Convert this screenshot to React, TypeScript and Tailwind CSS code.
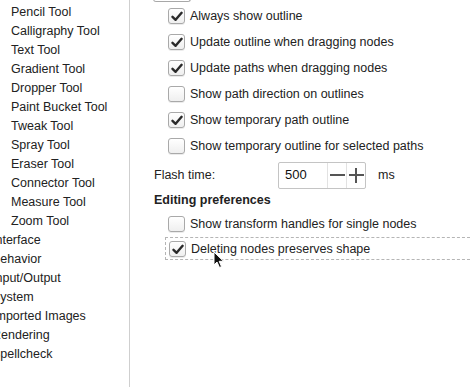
const tools = [
  "Pencil Tool",
  "Calligraphy Tool",
  "Text Tool",
  "Gradient Tool",
  "Dropper Tool",
  "Paint Bucket Tool",
  "Tweak Tool",
  "Spray Tool",
  "Eraser Tool",
  "Connector Tool",
  "Measure Tool",
  "Zoom Tool",
];

const sections = ["Interface", "Behavior", "Input/Output", "System", "Imported Images", "Rendering", "Spellcheck"];

const outlineOpts: [string, boolean][] = [
  ["Always show outline", true],
  ["Update outline when dragging nodes", true],
  ["Update paths when dragging nodes", true],
  ["Show path direction on outlines", false],
  ["Show temporary path outline", true],
  ["Show temporary outline for selected paths", false],
];

function Check({ on }: { on: boolean }) {
  return (
    <div className="w-[17px] h-[16px] shrink-0 rounded-[3px] border border-[#a9a9a9] bg-gradient-to-b from-white to-[#efefef] shadow-[0_1px_0_rgba(0,0,0,0.08)] flex items-center justify-center">
      {on && (
        <svg width="12" height="11" viewBox="0 0 12 11">
          <path d="M1.5 5.8 L4.6 8.8 L10.6 1.8" fill="none" stroke="#2a2a2a" strokeWidth="2.4" strokeLinecap="round" strokeLinejoin="round" />
        </svg>
      )}
    </div>
  );
}

function Row({ label, on }: { label: string; on: boolean }) {
  return (
    <div className="h-[26px] flex items-center gap-[5px] pl-[168px]">
      <Check on={on} />
      <span>{label}</span>
    </div>
  );
}

export default function App() {
  return (
    <div
      className="relative w-[470px] h-[387px] overflow-hidden bg-white text-[12.5px] text-[#222] flex"
      style={{ fontFamily: '"Liberation Sans", Arial, sans-serif' }}
    >
      <div className="w-[130px] h-full shrink-0 border-r border-[#cfcfcf] overflow-hidden pt-[3px]">
        {tools.map((t) => (
          <div key={t} className="h-[19px] leading-[19px] pl-[11px] whitespace-nowrap">
            {t}
          </div>
        ))}
        {sections.map((s) => (
          <div key={s} className="h-[19px] leading-[19px] -ml-[8px] whitespace-nowrap">
            {s}
          </div>
        ))}
      </div>

      <div className="flex-1 -ml-[130px] relative">
        <div className="ml-[153px] w-[38px] h-[3px] -mt-[1px] border-b border-x border-[#a8a8a8] rounded-b-[3px]" />
        <div className="mt-[1px]">
          {outlineOpts.map(([l, on]) => (
            <Row key={l} label={l} on={on} />
          ))}
        </div>
        <div className="flex items-center h-[28px] mt-[2px] pl-[154px]">
          <span className="w-[124px]">Flash time:</span>
          <div className="flex h-[27px] w-[88px] border border-[#c4c4c4] rounded-[2px] bg-white">
            <span className="flex-1 flex items-center pl-[6px] text-[#111] text-[13px]">500</span>
            <div className="w-[19px] border-l border-[#e2e2e2] flex items-center justify-center">
              <div className="w-[15px] h-[2px] bg-[#555]" />
            </div>
            <div className="w-[19px] border-l border-[#e2e2e2] flex items-center justify-center relative">
              <div className="w-[15px] h-[2px] bg-[#555]" />
              <div className="absolute w-[2px] h-[15px] bg-[#555]" />
            </div>
          </div>
          <span className="ml-[12px]">ms</span>
        </div>
        <div className="pl-[154px] font-bold h-[21px] leading-[21px] mt-[1px]">Editing preferences</div>
        <Row label="Show transform handles for single nodes" on={false} />
        <div className="ml-[165px] h-[23px] mt-[0px] border border-dashed border-[#b5b5b5] border-r-0 flex items-center gap-[5px] pl-[3px] pt-[1px]">
          <Check on={true} />
          <span>Deleting nodes preserves shape</span>
        </div>
      </div>

      <svg className="absolute left-[213px] top-[251px]" width="12" height="18" viewBox="0 0 12 18">
        <path d="M1 1 L1 14 L4 11 L6.5 16.5 L8.5 15.6 L6.2 10.3 L10.5 10.3 Z" fill="#111" stroke="#fff" strokeWidth="1" strokeLinejoin="round" />
      </svg>
    </div>
  );
}
